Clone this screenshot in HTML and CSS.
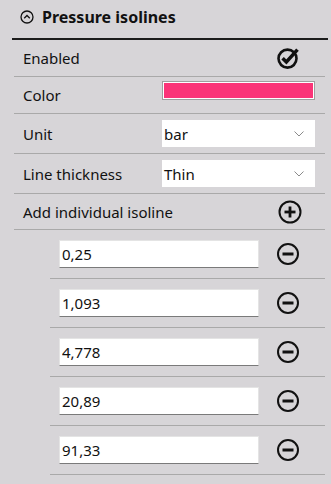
FILE: index.html
```html
<!DOCTYPE html>
<html lang="en">
<head>
  <meta charset="UTF-8">
  <meta name="viewport" content="width=device-width, initial-scale=1.0">
  <title>Pressure isolines</title>
  <link rel="stylesheet" href="styles.css">
</head>
<body>
  <div class="panel">
    <div class="panel-header">
      <svg class="collapse-icon" width="14" height="14" viewBox="0 0 14 14">
        <circle cx="7" cy="7" r="6" fill="none" stroke="#111" stroke-width="1.3"/>
        <polyline points="4.2,8.3 7,5.5 9.8,8.3" fill="none" stroke="#111" stroke-width="1.3"/>
      </svg>
      <span class="panel-title">Pressure isolines</span>
    </div>

    <div class="rows">
      <div class="row">
        <span class="label">Enabled</span>
        <div class="value">
          <svg class="icon" width="26" height="24" viewBox="0 0 26 24">
            <circle cx="11.5" cy="12.6" r="9" fill="none" stroke="#111" stroke-width="2.6"/>
            <polyline points="6.6,12.2 10.4,16 21.5,3.6" fill="none" stroke="#111" stroke-width="3.5"/>
          </svg>
        </div>
      </div>

      <div class="row">
        <span class="label">Color</span>
        <div class="value">
          <div class="swatch"><div class="swatch-fill"></div></div>
        </div>
      </div>

      <div class="row row-tall">
        <span class="label">Unit</span>
        <div class="value">
          <div class="select">
            <span>bar</span>
            <svg width="10" height="6" viewBox="0 0 10 6"><polyline points="0.5,0.5 5,5 9.5,0.5" fill="none" stroke="#8a8a8a" stroke-width="1"/></svg>
          </div>
        </div>
      </div>

      <div class="row row-tall">
        <span class="label">Line thickness</span>
        <div class="value">
          <div class="select">
            <span>Thin</span>
            <svg width="10" height="6" viewBox="0 0 10 6"><polyline points="0.5,0.5 5,5 9.5,0.5" fill="none" stroke="#8a8a8a" stroke-width="1"/></svg>
          </div>
        </div>
      </div>

      <div class="row row-add">
        <span class="label">Add individual isoline</span>
        <div class="value">
          <svg class="icon" width="24" height="24" viewBox="0 0 24 24">
            <circle cx="12" cy="12" r="10.5" fill="none" stroke="#111" stroke-width="2"/>
            <line x1="6.5" y1="12" x2="17.5" y2="12" stroke="#111" stroke-width="2.8"/>
            <line x1="12" y1="6.5" x2="12" y2="17.5" stroke="#111" stroke-width="2.8"/>
          </svg>
        </div>
      </div>

      <div class="isoline">
        <input type="text" value="0,25">
        <svg class="minus" width="24" height="24" viewBox="0 0 24 24">
          <circle cx="12" cy="12" r="10" fill="none" stroke="#111" stroke-width="2"/>
          <line x1="6.5" y1="12" x2="17.5" y2="12" stroke="#111" stroke-width="3"/>
        </svg>
      </div>
      <div class="isoline">
        <input type="text" value="1,093">
        <svg class="minus" width="24" height="24" viewBox="0 0 24 24">
          <circle cx="12" cy="12" r="10" fill="none" stroke="#111" stroke-width="2"/>
          <line x1="6.5" y1="12" x2="17.5" y2="12" stroke="#111" stroke-width="3"/>
        </svg>
      </div>
      <div class="isoline">
        <input type="text" value="4,778">
        <svg class="minus" width="24" height="24" viewBox="0 0 24 24">
          <circle cx="12" cy="12" r="10" fill="none" stroke="#111" stroke-width="2"/>
          <line x1="6.5" y1="12" x2="17.5" y2="12" stroke="#111" stroke-width="3"/>
        </svg>
      </div>
      <div class="isoline">
        <input type="text" value="20,89">
        <svg class="minus" width="24" height="24" viewBox="0 0 24 24">
          <circle cx="12" cy="12" r="10" fill="none" stroke="#111" stroke-width="2"/>
          <line x1="6.5" y1="12" x2="17.5" y2="12" stroke="#111" stroke-width="3"/>
        </svg>
      </div>
      <div class="isoline">
        <input type="text" value="91,33">
        <svg class="minus" width="24" height="24" viewBox="0 0 24 24">
          <circle cx="12" cy="12" r="10" fill="none" stroke="#111" stroke-width="2"/>
          <line x1="6.5" y1="12" x2="17.5" y2="12" stroke="#111" stroke-width="3"/>
        </svg>
      </div>
    </div>
  </div>
</body>
</html>
```
FILE: styles.css
```css
body {
  font-family: "Noto Sans", "Open Sans", sans-serif;
  font-size: 15px;
  color: #111;
  background-color: #d7d5d8;
  margin: 0;
  padding: 0;
}
.panel {
  padding: 0 3px 0 12px;
}
.panel-header {
  display: flex;
  align-items: center;
  height: 33px;
  padding: 0 0 5px 8px;
  border-bottom: 2px solid #1c1c1c;
}
.collapse-icon {
  flex: none;
  margin-right: 8px;
}
.panel-title {
  font-weight: bold;
  font-size: 16px;
}
.rows {
  margin: 0 3px 0 2px;
}
.row {
  display: flex;
  align-items: center;
  height: 36px;
  padding-left: 9px;
  border-bottom: 1px solid #a9a9a9;
}
.row-tall {
  height: 39px;
}
.row-add {
  height: 35px;
}
.label {
  flex: 0 0 139px;
  white-space: nowrap;
}
.value {
  flex: 1;
  display: flex;
  align-items: center;
  margin-right: 10px;
}
.icon {
  margin-left: auto;
  margin-right: 13px;
}
.swatch {
  flex: 1;
  height: 15px;
  border: 1px solid #9f9f9f;
  padding: 1px;
  background: #fff;
  margin-bottom: 10px;
}
.swatch-fill {
  height: 100%;
  background: #fb3478;
}
.select {
  flex: 1;
  display: flex;
  align-items: center;
  justify-content: space-between;
  height: 27px;
  padding: 0 11px 0 2px;
  background: #fff;
}
.isoline {
  display: flex;
  align-items: center;
  height: 48px;
  margin-left: 36px;
  padding-left: 9px;
  border-bottom: 1px solid #a9a9a9;
}
.isoline input {
  width: 200px;
  height: 28px;
  box-sizing: border-box;
  margin: 0;
  padding: 0 2px;
  border: 1px solid #e4e4e4;
  border-bottom-color: #7a7a7a;
  font-family: inherit;
  font-size: 15px;
  color: #111;
  outline: none;
}
.minus {
  margin-left: 17px;
}
```
